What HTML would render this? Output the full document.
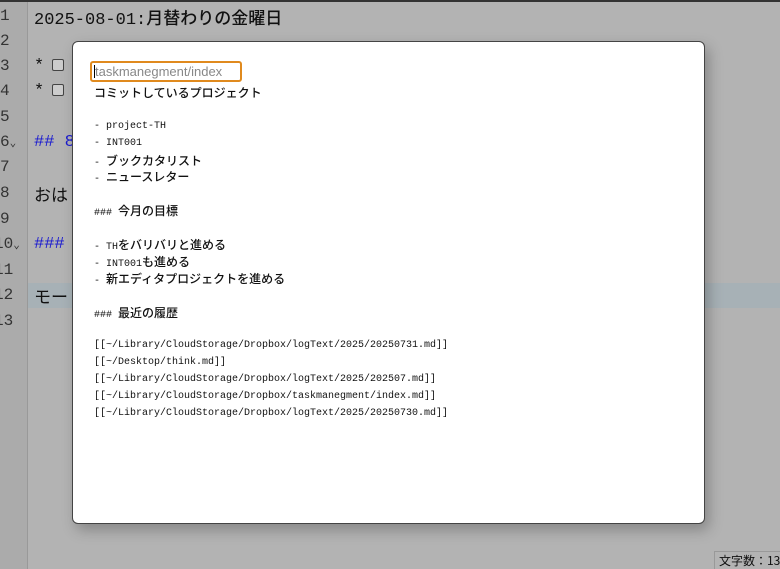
<!DOCTYPE html>
<html><head><meta charset="utf-8"><style>
*{margin:0;padding:0;box-sizing:border-box}
body{width:780px;height:569px;overflow:hidden;background:#b3b3b3;position:relative;font-family:"Liberation Mono","Noto Sans CJK JP",monospace}
.topb{position:absolute;left:0;top:0;width:780px;height:2px;background:#333}
.gut{position:absolute;left:0;top:2px;width:28px;height:567px;background:#ababab;border-right:1px solid #999}
.ln{position:absolute;left:0;font-size:16px;color:#333;height:25.6px;line-height:25.6px}
.tx{position:absolute;left:34px;font-size:17px;color:#111;line-height:25.6px;height:25.6px;font-family:"Liberation Mono","Noto Sans CJK JP",monospace;white-space:nowrap}
.cb{display:inline-block;width:12px;height:12px;border:1px solid #444;border-radius:2px;background:#ccc;vertical-align:-1px;margin-left:8px}
.hl{position:absolute;left:0;top:283px;width:780px;height:25px;background:#a7b1b6}
.modal{position:absolute;left:72px;top:41px;width:633px;height:483px;background:#fff;border:1px solid #444;border-radius:6px;box-shadow:4px 6px 14px rgba(0,0,0,.25)}
.inp{position:absolute;left:17px;top:19px;width:152px;height:21px;border:2px solid #e08a1e;border-radius:3px;font-family:"Liberation Sans",sans-serif;font-size:13px;color:#888;line-height:17px;padding-left:2px}
.cur{display:inline-block;width:1px;height:13px;background:#000;vertical-align:-2px}
.mt{position:absolute;left:21px;top:43px;font-size:10px;color:#111;font-family:"Liberation Mono","Noto Sans CJK JP",monospace}
.mt div{height:16.9px;line-height:16.9px;white-space:pre}
.mt b{font-weight:500;font-family:"Noto Sans CJK JP",sans-serif;font-size:12px}
.stat{position:absolute;left:714px;top:551px;width:66px;height:18px;border-top:1px solid #999;border-left:1px solid #999;background:#b3b3b3;font-size:12px;padding:1px 4px;line-height:16px;font-family:"Noto Sans CJK JP",sans-serif;white-space:nowrap;overflow:hidden;color:#111}
</style></head><body>
<div class="topb"></div>
<div class="hl"></div>
<div class="gut"></div>
<div class="ln" style="top:4px">1</div>
<div class="ln" style="top:29px">2</div>
<div class="ln" style="top:54px">3</div>
<div class="ln" style="top:79px">4</div>
<div class="ln" style="top:105px">5</div>
<div class="ln" style="top:130px">6<span style="font-size:11px">⌄</span></div>
<div class="ln" style="top:155px">7</div>
<div class="ln" style="top:181px">8</div>
<div class="ln" style="top:207px">9</div>
<div class="ln" style="top:232px;left:-6px">10<span style="font-size:11px">⌄</span></div>
<div class="ln" style="top:258px;left:-6px">11</div>
<div class="ln" style="top:283px;left:-6px">12</div>
<div class="ln" style="top:309px;left:-6px">13</div>
<div class="tx" style="top:4px;font-weight:500">2025-08-01:<span style="font-family:'Noto Sans CJK JP',sans-serif">月替わりの金曜日</span></div>
<div class="tx" style="top:54px">*<span class="cb"></span></div>
<div class="tx" style="top:79px">*<span class="cb"></span></div>
<div class="tx" style="top:130px;color:#1a1ad0">## 8</div>
<div class="tx" style="top:181px;font-family:'Noto Sans CJK JP',sans-serif">おは</div>
<div class="tx" style="top:232px;color:#1a1ad0">###</div>
<div class="tx" style="top:283px;font-family:'Noto Sans CJK JP',sans-serif">モー</div>
<div class="modal">
<div class="inp"><span class="cur"></span>taskmanegment/index</div>
<div class="mt">
<div><b>コミットしているプロジェクト</b></div>
<div> </div>
<div>- project-TH</div>
<div>- INT001</div>
<div>- <b>ブックカタリスト</b></div>
<div>- <b>ニュースレター</b></div>
<div> </div>
<div>### <b>今月の目標</b></div>
<div> </div>
<div>- TH<b>をバリバリと進める</b></div>
<div>- INT001<b>も進める</b></div>
<div>- <b>新エディタプロジェクトを進める</b></div>
<div> </div>
<div>### <b>最近の履歴</b></div>
<div> </div>
<div>[[~/Library/CloudStorage/Dropbox/logText/2025/20250731.md]]</div>
<div>[[~/Desktop/think.md]]</div>
<div>[[~/Library/CloudStorage/Dropbox/logText/2025/202507.md]]</div>
<div>[[~/Library/CloudStorage/Dropbox/taskmanegment/index.md]]</div>
<div>[[~/Library/CloudStorage/Dropbox/logText/2025/20250730.md]]</div>
</div>
</div>
<div class="stat">文字数：138</div>
</body></html>
